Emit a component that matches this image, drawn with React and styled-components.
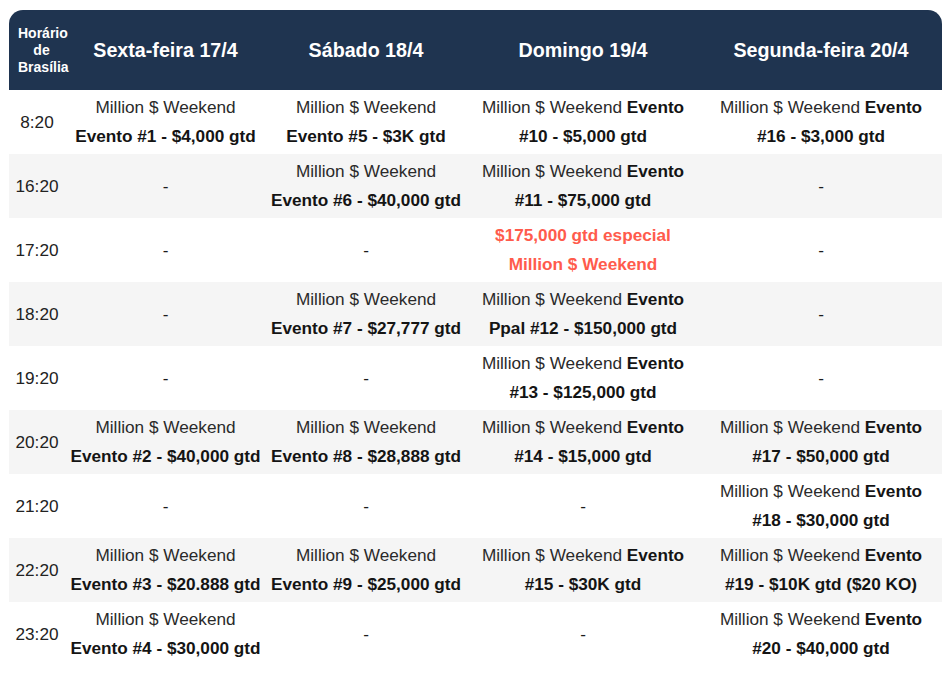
import React from 'react';
import styled, { createGlobalStyle } from 'styled-components';

const GlobalStyle = createGlobalStyle`
  body {
    margin: 0;
    background: #ffffff;
    font-family: 'Liberation Sans', Arial, sans-serif;
  }
`;

const Page = styled.div`
  padding: 10px 8px 10px 9px;
`;

const Table = styled.table`
  width: 933px;
  border-collapse: separate;
  border-spacing: 0;
  table-layout: fixed;
  font-family: 'Liberation Sans', Arial, sans-serif;
`;

const HeadCell = styled.th`
  background: #1f3450;
  color: #ffffff;
  height: 80px;
  padding: ${p => (p.small ? '0 0 0 9px' : '0 2px')};
  font-weight: 700;
  font-size: ${p => (p.small ? '14px' : '19.7px')};
  line-height: ${p => (p.small ? '17px' : '24px')};
  text-align: center;
  vertical-align: middle;
  white-space: nowrap;

  &:first-child {
    border-top-left-radius: 14px;
  }
  &:last-child {
    border-top-right-radius: 14px;
  }
`;

const Row = styled.tr`
  background: ${p => (p.shaded ? '#f5f5f5' : '#ffffff')};
`;

const Cell = styled.td`
  height: 64px;
  padding: 0;
  text-align: center;
  vertical-align: middle;
  font-size: 17.2px;
  line-height: 29px;
  color: #1c1c1c;
`;

const TimeCell = styled(Cell)`
  color: #222222;
`;

const Line = styled.div`
  white-space: nowrap;
`;

const Bold = styled.b`
  font-weight: 700;
  color: ${p => (p.accent ? '#ff5b4c' : '#141414')};
`;

const Plain = styled.span`
  color: #2a2a2a;
`;

const widths = [56, 201, 200, 234, 242];

const days = ['Sexta-feira 17/4', 'Sábado 18/4', 'Domingo 19/4', 'Segunda-feira 20/4'];

// each event: [bold word kept on line one (or ''), bold second line]
const ev = (first, second) => ({ first, second });

const rows = [
  ['8:20', [ev('', 'Evento #1 - $4,000 gtd'), ev('', 'Evento #5 - $3K gtd'), ev('Evento', '#10 - $5,000 gtd'), ev('Evento', '#16 - $3,000 gtd')]],
  ['16:20', [null, ev('', 'Evento #6 - $40,000 gtd'), ev('Evento', '#11 - $75,000 gtd'), null]],
  ['17:20', [null, null, { special: true }, null]],
  ['18:20', [null, ev('', 'Evento #7 - $27,777 gtd'), ev('Evento', 'Ppal #12 - $150,000 gtd'), null]],
  ['19:20', [null, null, ev('Evento', '#13 - $125,000 gtd'), null]],
  ['20:20', [ev('', 'Evento #2 - $40,000 gtd'), ev('', 'Evento #8 - $28,888 gtd'), ev('Evento', '#14 - $15,000 gtd'), ev('Evento', '#17 - $50,000 gtd')]],
  ['21:20', [null, null, null, ev('Evento', '#18 - $30,000 gtd')]],
  ['22:20', [ev('', 'Evento #3 - $20.888 gtd'), ev('', 'Evento #9 - $25,000 gtd'), ev('Evento', '#15 - $30K gtd'), ev('Evento', '#19 - $10K gtd ($20 KO)')]],
  ['23:20', [ev('', 'Evento #4 - $30,000 gtd'), null, null, ev('Evento', '#20 - $40,000 gtd')]],
];

const EventCell = ({ event }) => {
  if (!event) return <Cell>-</Cell>;
  if (event.special) {
    return (
      <Cell>
        <Line><Bold accent>$175,000 gtd especial</Bold></Line>
        <Line><Bold accent>Million $ Weekend</Bold></Line>
      </Cell>
    );
  }
  return (
    <Cell>
      <Line>
        <Plain>Million $ Weekend</Plain>
        {event.first && <> <Bold>{event.first}</Bold></>}
      </Line>
      <Line><Bold>{event.second}</Bold></Line>
    </Cell>
  );
};

export default function App() {
  return (
    <>
      <GlobalStyle />
      <Page>
        <Table>
          <colgroup>
            {widths.map((w, i) => <col key={i} style={{ width: w }} />)}
          </colgroup>
          <thead>
            <tr>
              <HeadCell small>Horário<br />de<br />Brasília</HeadCell>
              {days.map(d => <HeadCell key={d}>{d}</HeadCell>)}
            </tr>
          </thead>
          <tbody>
            {rows.map(([time, events], i) => (
              <Row key={time} shaded={i % 2 === 1}>
                <TimeCell>{time}</TimeCell>
                {events.map((e, j) => <EventCell key={j} event={e} />)}
              </Row>
            ))}
          </tbody>
        </Table>
      </Page>
    </>
  );
}
